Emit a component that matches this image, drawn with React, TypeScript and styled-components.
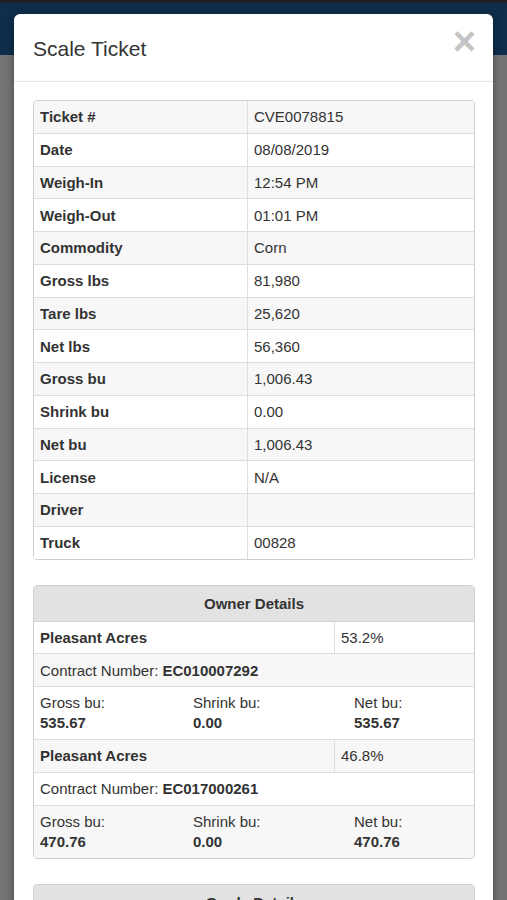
import styled, { createGlobalStyle } from "styled-components";

const GlobalStyle = createGlobalStyle`
  html, body {
    margin: 0;
    padding: 0;
    background: #747474;
    font-family: "Liberation Sans", Arial, sans-serif;
    color: #333;
    overflow: hidden;
  }
`;

type Row = { label: string; value: string };

const ticketRows: Row[] = [
  { label: "Ticket #", value: "CVE0078815" },
  { label: "Date", value: "08/08/2019" },
  { label: "Weigh-In", value: "12:54 PM" },
  { label: "Weigh-Out", value: "01:01 PM" },
  { label: "Commodity", value: "Corn" },
  { label: "Gross lbs", value: "81,980" },
  { label: "Tare lbs", value: "25,620" },
  { label: "Net lbs", value: "56,360" },
  { label: "Gross bu", value: "1,006.43" },
  { label: "Shrink bu", value: "0.00" },
  { label: "Net bu", value: "1,006.43" },
  { label: "License", value: "N/A" },
  { label: "Driver", value: "" },
  { label: "Truck", value: "00828" },
];

type Owner = {
  name: string;
  share: string;
  contract: string;
  gross: string;
  shrink: string;
  net: string;
};

const owners: Owner[] = [
  { name: "Pleasant Acres", share: "53.2%", contract: "EC010007292", gross: "535.67", shrink: "0.00", net: "535.67" },
  { name: "Pleasant Acres", share: "46.8%", contract: "EC017000261", gross: "470.76", shrink: "0.00", net: "470.76" },
];

export default function App() {
  return (
    <Page>
      <GlobalStyle />
      <TopBar />
      <Modal>
        <ModalHeader>
          <Title>Scale Ticket</Title>
          <Close>×</Close>
        </ModalHeader>
        <ModalBody>
          <Box>
            {ticketRows.map((r, i) => (
              <TicketRow key={r.label} $striped={i % 2 === 0} $last={i === ticketRows.length - 1}>
                <LabelCell>{r.label}</LabelCell>
                <ValueCell>{r.value}</ValueCell>
              </TicketRow>
            ))}
          </Box>

          <Box>
            <BoxHeader>Owner Details</BoxHeader>
            {owners.map((o, i) => (
              <OwnerGroup key={o.contract}>
                <OwnerRow $striped={i % 2 === 1}>
                  <LabelCell>{o.name}</LabelCell>
                  <ValueCell>{o.share}</ValueCell>
                </OwnerRow>
                <ContractRow $striped={i % 2 === 0}>
                  Contract Number: <b>{o.contract}</b>
                </ContractRow>
                <AmountRow $striped={i % 2 === 1} $last={i === owners.length - 1}>
                  <Amount>
                    Gross bu:
                    <b>{o.gross}</b>
                  </Amount>
                  <Amount>
                    Shrink bu:
                    <b>{o.shrink}</b>
                  </Amount>
                  <Amount>
                    Net bu:
                    <b>{o.net}</b>
                  </Amount>
                </AmountRow>
              </OwnerGroup>
            ))}
          </Box>

          <Box>
            <BoxHeader>Grade Details</BoxHeader>
          </Box>
        </ModalBody>
      </Modal>
    </Page>
  );
}

const Page = styled.div`
  position: relative;
  width: 507px;
  height: 900px;
  background: #747474;
  overflow: hidden;
`;

const TopBar = styled.div`
  height: 52px;
  background: #0e2e4b;
  border-top: 3px solid #1f1f24;
`;

const Modal = styled.div`
  position: absolute;
  top: 14px;
  left: 14px;
  width: 479px;
  min-height: 900px;
  background: #fff;
  border-radius: 6px;
  box-shadow: 0 3px 9px rgba(0, 0, 0, 0.4);
`;

const ModalHeader = styled.div`
  display: flex;
  align-items: center;
  justify-content: space-between;
  height: 67px;
  padding: 0 19px 0 19px;
  border-bottom: 1px solid #e5e5e5;
`;

const Title = styled.h4`
  margin: 2px 0 0 0;
  font-size: 21px;
  font-weight: normal;
  color: #333;
`;

const Close = styled.span`
  font-size: 40px;
  font-weight: bold;
  color: #c4c4c4;
  line-height: 1;
  margin-top: -14px;
  margin-right: -2px;
`;

const ModalBody = styled.div`
  display: flex;
  flex-direction: column;
  gap: 25px;
  padding: 18px 18px 0 19px;
`;

const Box = styled.div`
  border: 1px solid #cfcfcf;
  border-radius: 4px;
  overflow: hidden;
  font-size: 15px;
`;

const TicketRow = styled.div<{ $striped: boolean; $last?: boolean }>`
  display: grid;
  grid-template-columns: 214px 1fr;
  height: 31.75px;
  background: ${(p) => (p.$striped ? "#f7f7f7" : "#fff")};
  border-bottom: ${(p) => (p.$last ? "none" : "1px solid #dddddd")};
  box-sizing: content-box;
`;

const LabelCell = styled.div`
  display: flex;
  align-items: center;
  padding: 0 6px;
  font-weight: bold;
  border-right: 1px solid #dddddd;
`;

const ValueCell = styled.div`
  display: flex;
  align-items: center;
  padding: 0 6px;
`;

const BoxHeader = styled.div`
  height: 35px;
  display: flex;
  align-items: center;
  justify-content: center;
  background: #e2e2e2;
  font-weight: bold;
  border-bottom: 1px solid #d2d2d2;
`;

const OwnerGroup = styled.div``;

const OwnerRow = styled(TicketRow)`
  grid-template-columns: 301px 1fr;
`;

const ContractRow = styled.div<{ $striped: boolean }>`
  display: flex;
  align-items: center;
  gap: 4px;
  height: 31.75px;
  padding: 0 6px;
  background: ${(p) => (p.$striped ? "#f7f7f7" : "#fff")};
  border-bottom: 1px solid #dddddd;
`;

const AmountRow = styled.div<{ $striped: boolean; $last?: boolean }>`
  display: grid;
  grid-template-columns: 153px 161px 1fr;
  padding: 6px 0 6px;
  background: ${(p) => (p.$striped ? "#f7f7f7" : "#fff")};
  border-bottom: ${(p) => (p.$last ? "none" : "1px solid #dddddd")};
`;

const Amount = styled.div`
  display: flex;
  flex-direction: column;
  padding: 0 6px;
  line-height: 20px;
`;
